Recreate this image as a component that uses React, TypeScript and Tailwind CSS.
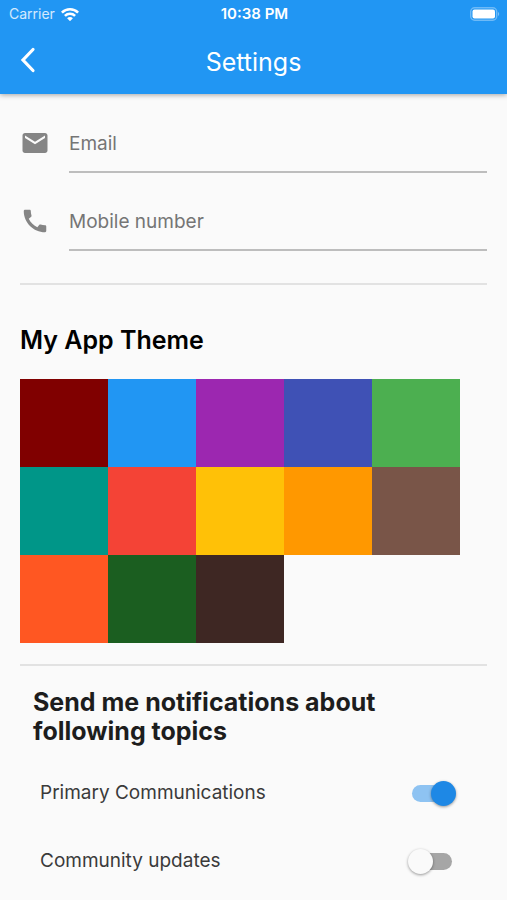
import { useState } from 'react';

const THEME_COLORS = [
    { name: 'Maroon', className: 'bg-[#800000]' },
    { name: 'Blue', className: 'bg-[#2196f3]' },
    { name: 'Purple', className: 'bg-[#9c27b0]' },
    { name: 'Indigo', className: 'bg-[#3f51b5]' },
    { name: 'Green', className: 'bg-[#4caf50]' },
    { name: 'Teal', className: 'bg-[#009688]' },
    { name: 'Red', className: 'bg-[#f44336]' },
    { name: 'Amber', className: 'bg-[#ffc107]' },
    { name: 'Orange', className: 'bg-[#ff9800]' },
    { name: 'Brown', className: 'bg-[#795548]' },
    { name: 'Deep orange', className: 'bg-[#ff5722]' },
    { name: 'Dark green', className: 'bg-[#1b5e20]' },
    { name: 'Dark brown', className: 'bg-[#3e2723]' },
];

const MAIL_PATH = 'M20 4H4c-1.1 0-1.99.9-1.99 2L2 18c0 1.1.9 2 2 2h16c1.1 0 2-.9 2-2V6c0-1.1-.9-2-2-2zm0 4l-8 5-8-5V6l8 5 8-5v2z';
const PHONE_PATH = 'M20.01 15.38c-1.23 0-2.42-.2-3.53-.56-.35-.12-.74-.03-1.01.24l-1.57 1.97c-2.83-1.35-5.48-3.9-6.89-6.83l1.95-1.66c.27-.28.35-.67.24-1.02-.37-1.11-.56-2.3-.56-3.53 0-.54-.45-.99-.99-.99H4.19C3.65 3 3 3.24 3 3.99 3 13.28 10.73 21 20.01 21c.71 0 .99-.63.99-1.18v-3.45c0-.54-.45-.99-.99-.99z';

function StatusBar() {
    return (
        <div className="grid grid-cols-3 items-center h-7 pl-[9px] pr-[7px]">
            <div className="flex items-center gap-1.5 text-sm text-white/80">
                Carrier
                <svg viewBox="0 0 18 13" className="w-[18px] h-[13px]" fill="none" stroke="white" strokeWidth="2.6">
                    <path d="M.9 4.6C5.4.2 12.6.2 17.1 4.6" />
                    <path d="M3.9 7.9c2.9-2.8 7.3-2.8 10.2 0" />
                    <path d="M9 13.2l-2.9-3c1.6-1.5 4.2-1.5 5.8 0z" fill="white" stroke="none" />
                </svg>
            </div>
            <div className="text-center text-[15px] font-semibold">10:38 PM</div>
            <svg viewBox="0 0 30 14" className="w-[30px] h-3.5 justify-self-end">
                <rect x="0.7" y="0.7" width="26" height="12.6" rx="4" fill="none" stroke="white" strokeOpacity="0.35" strokeWidth="1.4" />
                <rect x="2.5" y="2.5" width="22.5" height="9" rx="2" fill="white" />
                <path d="M28 5c1.6.6 1.6 3.4 0 4z" fill="white" fillOpacity="0.4" />
            </svg>
        </div>
    );
}

function Field({ id, label, type, icon }: { id: string; label: string; type: string; icon: string }) {
    return (
        <div className="flex">
            <label htmlFor={id} aria-label={label} className="w-[49px] pt-[15px]">
                <svg viewBox="0 0 24 24" className="w-[30px] h-[30px] fill-[#858585]"><path d={icon} /></svg>
            </label>
            <input id={id} type={type} placeholder={label}
                className="flex-1 min-w-0 h-[60px] pt-0.5 border-b-2 border-[#bdbdbd] bg-transparent text-[19px] text-gray-800 placeholder:text-[#757575] outline-none focus:border-[#2196f3]" />
        </div>
    );
}

function Toggle({ label, initial }: { label: string; initial: boolean }) {
    const [on, setOn] = useState(initial);

    return (
        <label className="flex items-center justify-between h-[68px] pl-5 pr-[35px] text-[19px] text-[#3a3a3a]">
            {label}
            <input type="checkbox" role="switch" checked={on} onChange={e => setOn(e.target.checked)}
                className="relative appearance-none w-10 h-[17px] rounded-full bg-[#a6a6a6] checked:bg-[#8ec3f2] before:absolute before:-top-1 before:-left-1 before:size-[25px] before:rounded-full before:bg-[#fafafa] before:shadow-[0_1px_3px_rgba(0,0,0,0.4)] checked:before:left-[19px] checked:before:bg-[#1e88e5]" />
        </label>
    );
}

export default function App() {
    const [theme, setTheme] = useState('Blue');

    return (
        <div className="min-h-screen bg-[#fafafa] font-['Inter','Liberation_Sans',sans-serif]">
            <header className="bg-[#2196f3] text-white shadow-[0_1px_5px_rgba(0,0,0,0.35)]">
                <StatusBar />
                <div className="grid grid-cols-[1fr_auto_1fr] items-center h-[66px] px-5">
                    <button aria-label="Back" className="justify-self-start pb-0.5">
                        <svg viewBox="0 0 16 26" className="w-4 h-[26px]" fill="none" stroke="white" strokeWidth="3.2" strokeLinecap="round" strokeLinejoin="miter">
                            <path d="M13 2.5L3 13l10 10.5" />
                        </svg>
                    </button>
                    <h1 className="pt-1 text-[25px]">Settings</h1>
                </div>
            </header>

            <main className="px-5 pt-[19px]">
                <form className="flex flex-col gap-[18px] pb-8 border-b-2 border-[#e2e2e2]">
                    <Field id="email" label="Email" type="email" icon={MAIL_PATH} />
                    <Field id="mobile" label="Mobile number" type="tel" icon={PHONE_PATH} />
                </form>

                <section className="pt-[39px] pb-[21px] border-b-2 border-[#e2e2e2]">
                    <h2 className="text-[25px] leading-8 font-semibold text-black">My App Theme</h2>
                    <div className="flex flex-wrap pt-[23px]">
                        {THEME_COLORS.map(color => (
                            <button key={color.name} title={color.name} aria-pressed={theme === color.name}
                                onClick={() => setTheme(color.name)} className={`size-[88px] ${color.className}`} />
                        ))}
                    </div>
                </section>

                <section className="pt-[22px]">
                    <h2 className="px-[13px] pb-[13px] text-[25px] leading-[29px] font-bold text-[#1d1d1d]">
                        Send me notifications about following topics
                    </h2>
                    <Toggle label="Primary Communications" initial={true} />
                    <Toggle label="Community updates" initial={false} />
                </section>
            </main>
        </div>
    );
}
